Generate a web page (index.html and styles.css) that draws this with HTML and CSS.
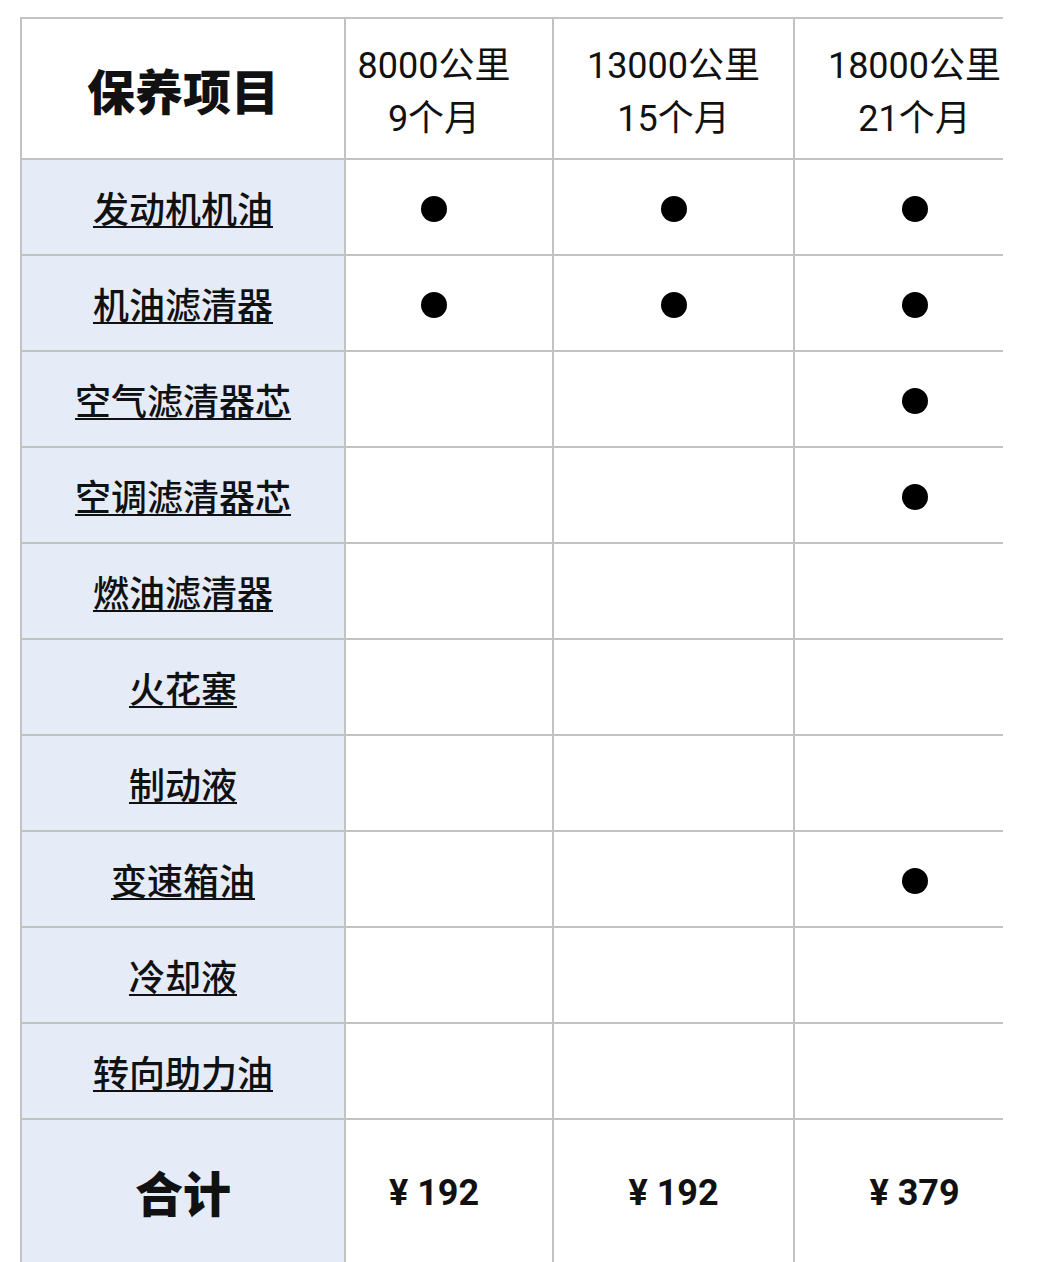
FILE: index.html
```html
<!DOCTYPE html>
<html lang="zh-CN">
<head>
<meta charset="utf-8">
<title>保养项目</title>
<link rel="stylesheet" href="styles.css">
</head>
<body>
<div class="frame">
<table class="plan">
  <colgroup>
    <col class="c-item">
    <col class="c-a">
    <col class="c-b">
    <col class="c-c">
  </colgroup>
  <thead>
    <tr class="head">
      <th class="title">保养项目</th>
      <th class="period first">8000公里<br>9个月</th>
      <th class="period">13000公里<br>15个月</th>
      <th class="period">18000公里<br>21个月</th>
    </tr>
  </thead>
  <tbody>
    <tr><td class="item"><a>发动机机油</a></td><td class="mark first"><i class="dot"></i></td><td class="mark"><i class="dot"></i></td><td class="mark"><i class="dot"></i></td></tr>
    <tr><td class="item"><a>机油滤清器</a></td><td class="mark first"><i class="dot"></i></td><td class="mark"><i class="dot"></i></td><td class="mark"><i class="dot"></i></td></tr>
    <tr><td class="item"><a>空气滤清器芯</a></td><td class="mark first"></td><td class="mark"></td><td class="mark"><i class="dot"></i></td></tr>
    <tr><td class="item"><a>空调滤清器芯</a></td><td class="mark first"></td><td class="mark"></td><td class="mark"><i class="dot"></i></td></tr>
    <tr><td class="item"><a>燃油滤清器</a></td><td class="mark first"></td><td class="mark"></td><td class="mark"></td></tr>
    <tr><td class="item"><a>火花塞</a></td><td class="mark first"></td><td class="mark"></td><td class="mark"></td></tr>
    <tr><td class="item"><a>制动液</a></td><td class="mark first"></td><td class="mark"></td><td class="mark"></td></tr>
    <tr><td class="item"><a>变速箱油</a></td><td class="mark first"></td><td class="mark"></td><td class="mark"><i class="dot"></i></td></tr>
    <tr><td class="item"><a>冷却液</a></td><td class="mark first"></td><td class="mark"></td><td class="mark"></td></tr>
    <tr><td class="item"><a>转向助力油</a></td><td class="mark first"></td><td class="mark"></td><td class="mark"></td></tr>
    <tr class="total"><td class="item sum">合计</td><td class="price first">¥ 192</td><td class="price">¥ 192</td><td class="price">¥ 379</td></tr>
  </tbody>
</table>
</div>
</body>
</html>
```
FILE: styles.css
```css
html, body {
  margin: 0;
  padding: 0;
  background: #ffffff;
}

body {
  font-family: Roboto, "Noto Sans CJK SC", sans-serif;
  color: #111111;
}

.frame {
  margin: 17px 0 0 20px;
  width: 983px;
  height: 1245px;
  overflow: hidden;
}

.plan {
  table-layout: fixed;
  border-collapse: separate;
  border-spacing: 0;
  width: 1014px;
  border-top: 2px solid #c2c2c2;
  border-left: 2px solid #c2c2c2;
}

.c-item { width: 324px; }
.c-a { width: 208px; }
.c-b { width: 241px; }
.c-c { width: 241px; }

.plan th,
.plan td {
  border-right: 2px solid #c2c2c2;
  border-bottom: 2px solid #c2c2c2;
  padding: 0;
  text-align: center;
  vertical-align: middle;
  box-sizing: border-box;
}

.head { height: 141px; }
.plan tbody tr { height: 96px; }
.plan tbody tr.total { height: 160px; }

.title {
  font-family: "Noto Sans CJK SC", sans-serif;
  font-weight: 900;
  font-size: 48px;
  background: #ffffff;
  padding-top: 4px;
}

.plan th.period {
  font-family: Roboto, "Noto Sans CJK SC", sans-serif;
  font-weight: 400;
  font-size: 36px;
  line-height: 53px;
  padding-top: 8px;
}

.first { padding-right: 30px !important; }

.item {
  background: #e5ecf8;
  font-family: "Noto Sans CJK SC", sans-serif;
  font-weight: 500;
  font-size: 36px;
}

.item a {
  color: #111111;
  text-decoration: underline;
  text-decoration-thickness: 2px;
  text-underline-offset: 3px;
}

.mark { background: #ffffff; }

.dot {
  display: inline-block;
  width: 26px;
  height: 26px;
  border-radius: 50%;
  background: #000000;
  vertical-align: middle;
  margin-top: 4px;
}

.sum {
  font-weight: 900;
  font-size: 48px;
  padding-bottom: 16px !important;
}

.price {
  font-family: Roboto, "Noto Sans CJK SC", sans-serif;
  font-weight: 700;
  font-size: 36px;
  padding-bottom: 12px !important;
}
```
